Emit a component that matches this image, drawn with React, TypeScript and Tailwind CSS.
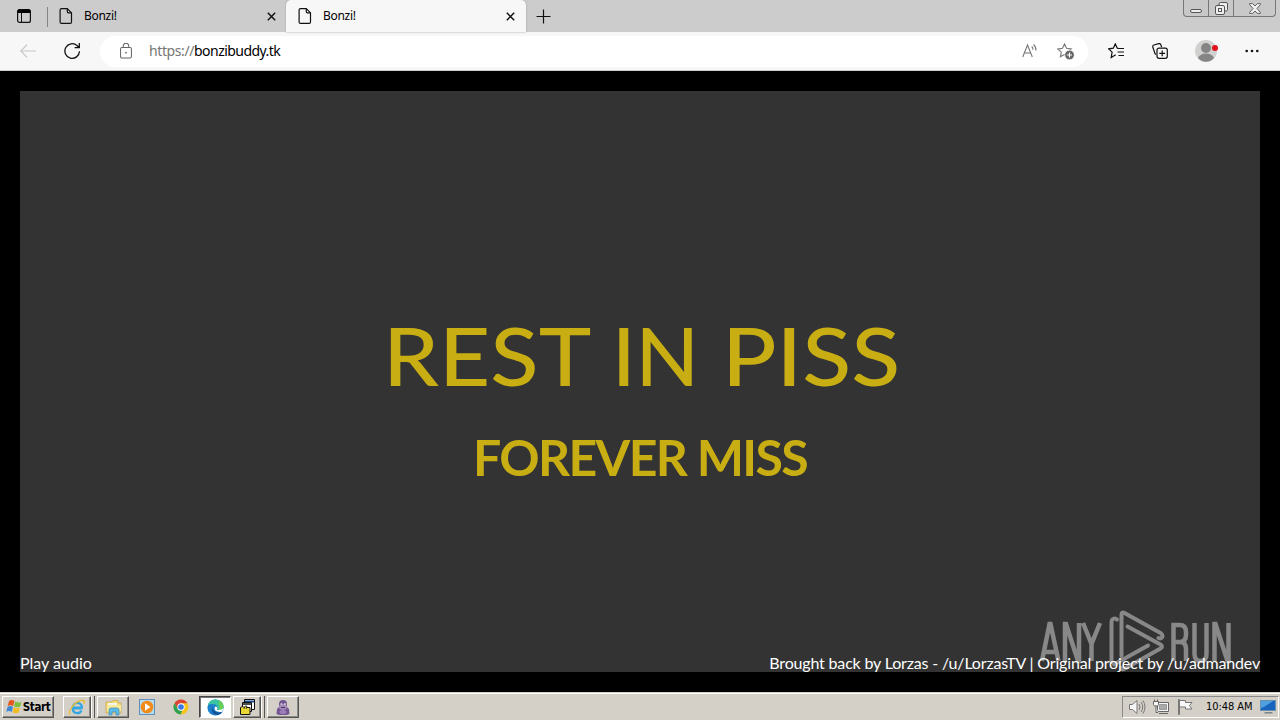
import React from "react";

function PageIcon() {
  return (
    <svg width="14" height="16" viewBox="0 0 14 16" fill="none" stroke="#111" strokeWidth="1.2" strokeLinejoin="round">
      <path d="M2.5.6h5.8l4.2 4.2v9.1c0 .9-.5 1.5-1.4 1.5H2.5c-.9 0-1.4-.6-1.4-1.5V2C1.100 1.100 1.600.6 2.500.6z" />
      <path d="M8.300.8v3c0 .7.4 1.100 1.100 1.100h3" />
    </svg>
  );
}

function CloseIcon() {
  return (
    <svg width="9" height="9" viewBox="0 0 9 9" stroke="#111" strokeWidth="1.5">
      <path d="M.8.800l7.400 7.400M8.200.800L.8 8.200" />
    </svg>
  );
}

function TabStrip() {
  return (
    <div className="flex h-8 bg-[#cccccc]">
      <div className="flex w-[47px] items-center pl-[17px]">
        <svg width="14" height="14" viewBox="0 0 14 14">
          <rect x=".6" y=".6" width="12.800" height="12.800" rx="2" fill="none" stroke="#111" strokeWidth="1.200" />
          <path d="M.6 4V2Q.6.600 2 .6h10q1.400 0 1.400 1.400v2z" fill="#000" />
          <path d="M4.500 4v9" stroke="#111" />
        </svg>
      </div>
      <div className="mt-[7px] h-5 w-px bg-[#858585]" />
      <div className="flex w-[238px] items-center pl-[11px] pr-[10px]">
        <PageIcon />
        <span className="ml-[11px] grow text-[12px] leading-4 tracking-[-0.3px]">Bonzi!</span>
        <CloseIcon />
      </div>
      <div className="flex w-[240px] items-center rounded-t-[5px] bg-[#f7f7f7] pl-[12px] pr-[11px] shadow-[0_0_2px_#999]">
        <PageIcon />
        <span className="ml-[11px] grow text-[12px] leading-4 tracking-[-0.3px]">Bonzi!</span>
        <CloseIcon />
      </div>
      <div className="flex grow items-center pl-[10px]">
        <svg width="15" height="15" viewBox="0 0 15 15" stroke="#111" strokeWidth="1.200">
          <path d="M7.500.5v14M.5 7.500h14" />
        </svg>
      </div>
      <div className="mr-1 flex h-[17px] w-[93px] rounded-b-[4px] border border-t-0 border-[#777] bg-[#c8c8c8]">
        <div className="flex w-[25px] items-end justify-center border-r border-[#777] pb-[3px]">
          <div className="h-[4px] w-3 rounded-[2px] border border-[#555] bg-[#eee]" />
        </div>
        <div className="flex w-[25px] items-center justify-center border-r border-[#777]">
          <svg width="13" height="13" viewBox="0 0 13 13" fill="#eee" stroke="#555">
            <rect x="4" y=".5" width="8.500" height="8.500" rx="1.500" />
            <rect x=".5" y="3.500" width="9" height="9" rx="1.500" />
            <rect x="3.500" y="6.500" width="3" height="3" />
          </svg>
        </div>
        <div className="flex grow items-center justify-center">
          <svg width="12" height="11" viewBox="0 0 12 11">
            <path d="M.6.600h3L6 3 8.400.600h3v1L8 5.500l3.400 3.900v1h-3L6 8l-2.400 2.400h-3v-1L4 5.500.600 1.600z" fill="#eee" stroke="#555" strokeWidth=".9" />
          </svg>
        </div>
      </div>
    </div>
  );
}

const star = "M7.500 1l2 4.300 4.700.6-3.500 3.200.9 4.700-4.100-2.300-4.100 2.300.9-4.700L.800 5.900l4.700-.6z";

function Toolbar() {
  return (
    <div className="flex h-[39px] items-center border-b border-[#cfcfcf] bg-[#f7f7f7]">
      <svg className="ml-5 shrink-0" width="16" height="14" viewBox="0 0 16 14" fill="none" stroke="#c5c5c5" strokeWidth="1.100">
        <path d="M7 .7L.8 7 7 13.300M.8 7H16" />
      </svg>
      <svg className="ml-7 shrink-0" width="17" height="18" viewBox="0 0 17 18" fill="none" stroke="#111" strokeWidth="1.300">
        <path d="M15.500 9.300A7.300 7.300 0 1 1 13 3.500l2 2M15.300 1v4.700h-4.700" />
      </svg>
      <div className="ml-[19px] flex h-[31px] w-[988px] items-center rounded-full bg-white pl-5 pr-3">
        <svg width="12" height="16" viewBox="0 0 13 16" preserveAspectRatio="none" fill="none" stroke="#666" strokeWidth="1.100">
          <rect x=".6" y="4.500" width="11.800" height="10.500" rx="1.500" />
          <path d="M3.500 4.500V3.200a3 3 0 0 1 6 0v1.300" />
          <circle cx="6.500" cy="9.700" r=".9" fill="#666" stroke="none" />
        </svg>
        <div className="ml-[17px] grow text-[14px] leading-5 text-black">
          <span className="tracking-[-0.4px] text-[#767676]">https://</span>
          <span className="tracking-[-0.55px]">bonzibuddy.tk</span>
        </div>
        <svg width="17" height="16" viewBox="0 0 17 16" fill="none" stroke="#777" strokeWidth="1.100">
          <path d="M.7 14L5.500 2l4.800 12M2.300 10h6.400M9.700 3.500q1.300 1.200 1.300 3.300M11.500 1.500q2.600 2 2.500 6" />
        </svg>
        <svg className="ml-[18px] mr-[1px]" width="18" height="17" viewBox="0 0 18 17" fill="none" stroke="#777" strokeWidth="1.100">
          <path d={star} />
          <circle cx="12.500" cy="12" r="4.800" fill="#666" stroke="white" strokeWidth=".7" />
          <path d="M12.500 9.500v5M10 12h5" stroke="white" />
        </svg>
      </div>
      <svg className="ml-5 shrink-0" width="17" height="16" viewBox="0 0 17 16" fill="none" stroke="#111" strokeWidth="1.200">
        <path d="M10.500 5.400L9.300 5.200 7.300.900l-2 4.300-4.700.6 3.500 3.300-.9 5.400 4.500-2.700M10.500 5.500H16M9.500 9H16M10.500 12.500H16" />
      </svg>
      <svg className="ml-[27px] shrink-0" width="16" height="16" viewBox="0 0 16 16" fill="none" stroke="#111" strokeWidth="1.200">
        <path d="M4 11.500l-1-.8L.8 4q-.4-1.500 1-2L6.800.600q1.500-.3 2 1L9.600 4" />
        <rect x="5" y="5.200" width="10.300" height="10.100" rx="2" />
        <path d="M10.200 7.500v5.800M7.300 10.300h5.800" />
      </svg>
      <svg className="ml-[27px] shrink-0" width="24" height="22" viewBox="0 0 24 22">
        <circle cx="11" cy="11" r="11" fill="#d1d1cf" />
        <circle cx="11" cy="8" r="5" fill="#858585" />
        <path d="M3 18q2-4.500 8-4.500t8 4.500q-3 3.700-8 3.700T3 18z" fill="#858585" />
        <circle cx="20" cy="8" r="3" fill="#e3121c" />
      </svg>
      <svg className="ml-[26px] shrink-0" width="14" height="4" viewBox="0 0 14 4" fill="#111">
        <circle cx="1.700" cy="2" r="1.300" />
        <circle cx="7" cy="2" r="1.300" />
        <circle cx="12.300" cy="2" r="1.300" />
      </svg>
    </div>
  );
}

function Watermark() {
  return (
    <div className="absolute left-[1018px] top-[519px] flex h-[66px] w-[196px] text-[#979797] opacity-85">
      <svg width="196" height="66" viewBox="0 0 196 66" fill="none" stroke="currentColor" strokeWidth="4" strokeLinejoin="round" strokeLinecap="round">
        <g strokeLinecap="butt" strokeLinejoin="miter" strokeWidth="4.500">
          <path d="M4 51L11.500 14h1l8 37M6 42h12M27 51V14h1l12 37h1V13M45 13l8.500 21v17M62 13l-8.500 21" />
          <path d="M135.500 51V15h6q6.500 0 6.500 7v3q0 7-6.500 7h-6M142 32q6 0 6 7v12M156.500 13v31q0 7 6 7t6-7V13M176.500 51V14h1l12 37h1V13" />
        </g>
        <path d="M79 9.500q-1.500-1.500-4-.5-1.500.8-1.500 3V52" />
        <path d="M83.500 46V5q0-3.500 3-2l36 20q3 2 1.500 4.500-1.200 1.500-3.500.5" />
        <path d="M89.500 16.500l33 18q3 2 0 4L88 58q-5 3-5-.5" />
        <path d="M110 35.500L76 54.500" />
      </svg>
    </div>
  );
}

function PageContent() {
  return (
    <main className="h-[621px] bg-black px-5 pb-5 pt-5 font-['Lato',sans-serif]">
      <div className="relative flex h-[581px] flex-col items-center bg-[#333333]">
        <h1 className="mt-[215px] flex h-[98px] w-full whitespace-nowrap pl-[363px] text-[81px] font-medium leading-[98px] text-[#c8ae13]">
          <span className="w-[229px] origin-left scale-x-[1.097]">REST</span>
          <span className="w-[110px] origin-left scale-x-[1.025]">IN</span>
          <span className="origin-left scale-x-[1.113]">PISS</span>
        </h1>
        <h2 className="mt-[23px] whitespace-nowrap text-[50px] font-bold leading-[60px] tracking-[-1.65px] text-[#c8ae13]">FOREVER MISS</h2>
        <Watermark />
        <div className="relative mt-auto flex h-[18px] w-full justify-between whitespace-nowrap text-[16px] leading-[17px] text-white">
          <span>Play audio</span>
          <span className="tracking-[-0.17px]">Brought back by Lorzas - /u/LorzasTV | Original project by /u/admandev</span>
        </div>
      </div>
    </main>
  );
}

const raised = "flex items-center justify-center border border-b-[#555] border-l-white border-r-[#555] border-t-white bg-[#d4d0c8] shadow-[inset_-1px_-1px_#8b8984]";

function WindowsLogo() {
  return (
    <svg width="16" height="16" viewBox="0 0 16 16">
      <path d="M3 2q3-2 5.500 0L7.200 7Q4.500 5.300 1.700 7z" fill="#e65720" />
      <path d="M9.300 2.500q3 2 6.200.2L14.200 7.500Q11 9 8 7.300z" fill="#7cbf3a" />
      <path d="M1.500 7.900q3-1.700 5.500 0l-1.300 5Q3 11.200.2 12.900z" fill="#3d89d6" />
      <path d="M7.800 8.300q3 1.900 6.200.2l-1.300 5Q9.500 15 6.500 13.200z" fill="#f5bb27" />
    </svg>
  );
}

function Taskbar() {
  return (
    <div className="flex h-7 items-center border-t border-[#d4d0c8] bg-[#d4d0c8] shadow-[inset_0_1px_white]">
      <div className={`${raised} ml-[2px] mt-[1px] h-[22px] w-[52px] gap-px`}>
        <WindowsLogo />
        <span className="font-['DejaVu_Sans_Condensed','DejaVu_Sans',sans-serif] text-[11.500px] font-bold leading-4 tracking-[-0.4px]">Start</span>
      </div>
      <div className={`${raised} ml-[9px] mt-[1px] h-[22px] w-7`}>
        <svg width="18" height="17" viewBox="0 0 18 17" fill="none">
          <path d="M14.200 9.500H4.800a4.500 4.500 0 0 0 8.600 2M4.800 8.500a4.500 4.500 0 0 1 9.200 0z" stroke="#32a5e3" strokeWidth="2.200" />
          <path d="M2 15.500C-.5 13 7 1 15 1.300q2.500.3.800 3.700" stroke="#e8bd37" strokeWidth="1.400" />
        </svg>
      </div>
      <div className="mt-[1px] h-[22px] w-[4px] border-r border-[#555] bg-[#d4d0c8] shadow-[inset_1px_0_white]" />
      <div className={`${raised} ml-[2px] mt-[1px] h-[22px] w-8`}>
        <svg width="17" height="17" viewBox="0 0 17 17">
          <path d="M1 3h6l1-1.500h5V4h3v10H1z" fill="#f6dc79" stroke="#c7a546" strokeWidth=".7" />
          <path d="M3 4h9v3H3z" fill="#eff7ed" />
          <path d="M2 6h14v6H2z" fill="#f8e89c" />
          <path d="M4 16v-5q0-2 2-2h6q2 0 2 2v5h-3v-3H7v3z" fill="#5eb9e5" stroke="#3c8fbd" strokeWidth=".7" />
        </svg>
      </div>
      <svg className="ml-[10px] mt-[1px]" width="16" height="16" viewBox="0 0 16 16">
        <rect x=".5" y=".5" width="15" height="15" fill="#b9d9ed" stroke="#5d91bf" />
        <circle cx="8" cy="8" r="6.300" fill="#f08a18" />
        <path d="M6 4.200l5.500 3.800L6 11.800z" fill="white" />
      </svg>
      <svg className="ml-[18px] mt-[1px]" width="16" height="16" viewBox="0 0 16 16">
        <circle cx="8" cy="8" r="7.500" fill="#f6c51d" />
        <path d="M1.500 4.200A7.500 7.500 0 0 1 14.500 4.300H8L4.800 10z" fill="#db4437" />
        <path d="M1.500 4.200L5 10q1.500 2 4.300 1.800L7.500 15.500A7.500 7.500 0 0 1 1.500 4.200z" fill="#2fa156" />
        <circle cx="8" cy="8" r="3.700" fill="white" />
        <circle cx="8" cy="8" r="2.800" fill="#3978e7" />
      </svg>
      <div className="ml-[10px] mt-[1px] flex h-[22px] w-8 items-center justify-center border border-b-white border-l-[#444] border-r-white border-t-[#444] bg-white shadow-[inset_1px_1px_#777]">
        <svg width="17" height="17" viewBox="0 0 16 16">
          <circle cx="8" cy="8" r="7.600" fill="#1b7fcb" />
          <path d="M.8 6C2 1.500 6 .3 9 .6c4 .4 6.700 3.300 6.600 6.500 0 3-4 4-6 2.700q1.300-4-2.500-4.800Q3 4 .8 6z" fill="#3cc3a0" />
          <path d="M11 1.200q4.600 2 4.600 6c0 2-2 3-4 3z" fill="#63cf57" />
          <path d="M5 7.500q-1.500 5 3 7 4 1.500 6.700-2.500-3 1.500-6 .3Q5.500 11 5 7.500z" fill="#164e92" />
          <path d="M7.500 7.200q-1.300 3.300 2 4.500 2.500.8 4.800.2l1.200-3.300q-2.800 2.300-6.200 1.400 1.200-1.200-.2-2.800z" fill="white" />
        </svg>
      </div>
      <div className={`${raised} ml-[2px] mt-[1px] h-[22px] w-7`}>
        <svg width="17" height="17" viewBox="0 0 17 17" stroke="#111">
          <path d="M5.500.5h10v10h-10z" fill="#fff" />
          <path d="M6 2.500h9" stroke="#174b99" strokeWidth="2" />
          <path d="M3.500 3.500h9v9h-9z" fill="#fff" />
          <path d="M4 5h8" strokeWidth="1.500" />
          <path d="M1.500 8.500l2-1 2 1h5.500v7h-9.500z" fill="#ebd735" />
          <path d="M5 10l1-3h2l-1 3" fill="#ebd735" strokeWidth=".7" />
        </svg>
      </div>
      <div className="mt-[1px] h-[22px] w-[4px] border-r border-[#555] bg-[#d4d0c8] shadow-[inset_1px_0_white]" />
      <div className={`${raised} ml-[2px] mt-[1px] h-[22px] w-8`}>
        <svg width="16" height="17" viewBox="0 0 16 17">
          <path d="M4 5q0-4 4-4t4 4v3l2 2 .5 5-3 1H4.500l-3-1L2 10l2-2z" fill="#725492" />
          <ellipse cx="8" cy="8" rx="4" ry="3" fill="#a48ab9" />
          <ellipse cx="8" cy="13" rx="3.500" ry="2" fill="#9c7cb6" />
          <path d="M5.500 5h2M9 5h2" stroke="white" />
          <path d="M6 8.500h4" stroke="#49355b" />
        </svg>
      </div>
      <div className="ml-auto mr-[1px] mt-[1px] flex h-[22px] w-[157px] items-center border border-b-white border-l-[#898989] border-r-white border-t-[#898989] pl-[6px]">
        <svg width="17" height="16" viewBox="0 0 17 16" fill="none" stroke="#777">
          <path d="M.5 5.500h3L8 1.500v13l-4.500-4h-3z" fill="#f7f7f7" />
          <path d="M10 5q2 3 0 6M12 3q3.500 5 0 10M14 1.500q4 6.500 0 13" />
        </svg>
        <svg className="ml-[7px]" width="16" height="16" viewBox="0 0 16 16" fill="#f7f7f7" stroke="#666">
          <path d="M4.500 3.500h11v9h-11z" />
          <path d="M6.500 5.500h7v5h-7z" fill="#aaa" stroke="#999" />
          <path d="M6 14.500h9" />
          <path d="M.5 2.500h5v3L4.500 7h-3l-1-1.500zM1.500.5v2M4.500.500v2M3 7v6.500h2" />
        </svg>
        <svg className="ml-[8px]" width="17" height="16" viewBox="0 0 17 16" fill="#f7f7f7" stroke="#777">
          <path d="M1.500.500h1v15h-1z" />
          <path d="M2.500 1.500h6v2h6.500l-2.500 3 2.500 3.500H8.500v-2h-6z" />
        </svg>
        <span className="ml-[12px] w-[48px] whitespace-nowrap font-['DejaVu_Sans_Condensed','DejaVu_Sans',sans-serif] text-[11px] leading-4 tracking-[-0.05px]">10:48 AM</span>
        <svg className="ml-[6px]" width="16" height="14" viewBox="0 0 16 14">
          <rect x=".5" y=".5" width="15" height="10" fill="#1763bd" stroke="#6a91ad" />
          <path d="M1 1h12L4 7l-3 1z" fill="#4fa0df" />
          <path d="M5 12h7l1 1.500H4z" fill="#78858a" />
        </svg>
      </div>
    </div>
  );
}

export default function App() {
  return (
    <div className="h-[720px] w-[1280px] overflow-hidden bg-black font-['Noto_Sans','Open_Sans',sans-serif] text-black">
      <TabStrip />
      <Toolbar />
      <PageContent />
      <Taskbar />
    </div>
  );
}
